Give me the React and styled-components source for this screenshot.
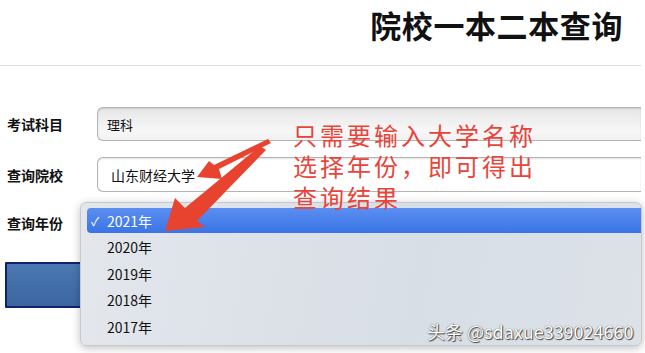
import React from "react";
import styled, { createGlobalStyle } from "styled-components";

const GlobalStyle = createGlobalStyle`
  html, body {
    margin: 0;
    padding: 0;
    background: #fff;
    font-family: "Liberation Sans", "Noto Sans CJK SC", sans-serif;
    overflow: hidden;
  }
`;

const years = ["2021年", "2020年", "2019年", "2018年", "2017年"];

const Page = styled.div`
  position: relative;
  width: 645px;
  height: 353px;
  overflow: hidden;
`;

const Header = styled.header`
  display: flex;
  justify-content: flex-end;
  height: 66px;
  padding-right: 18px;
  border-bottom: 1px solid #dcdcdc;
  box-sizing: border-box;
  margin-right: 4px;
`;

const Title = styled.h1`
  margin: 7px 0 0;
  font-size: 31px;
  font-weight: 700;
  color: #111;
  letter-spacing: 0.6px;
  font-family: "Noto Sans CJK SC", sans-serif;
  line-height: 36px;
`;

const Form = styled.form`
  display: flex;
  flex-direction: column;
  gap: 16px;
  padding: 41px 4px 0 7px;
`;

const Row = styled.div`
  display: flex;
  align-items: center;
  height: ${(p) => p.$h || 34}px;
`;

const Label = styled.label`
  width: 90px;
  flex-shrink: 0;
  font-size: 14px;
  font-weight: 700;
  color: #111;
  font-family: "Noto Sans CJK SC", sans-serif;
`;

const Field = styled.div`
  flex: 1;
  height: 100%;
  box-sizing: border-box;
  border: 1px solid #b4b4b4;
  border-right: none;
  border-radius: 6px 0 0 6px;
  display: flex;
  align-items: center;
  padding-left: ${(p) => p.$pad || 9}px;
  font-size: ${(p) => p.$size || 13}px;
  font-family: "Noto Sans CJK SC", sans-serif;
  color: #111;
  background: ${(p) =>
    p.$gray ? "linear-gradient(#e6e6e6, #f7f7f7 70%, #f2f2f2)" : "#fff"};
  box-shadow: inset 0 1px 2px rgba(0, 0, 0, 0.12);
`;

const SubmitButton = styled.button`
  width: 80px;
  height: 46px;
  margin-left: -2px;
  margin-top: 16px;
  background: linear-gradient(#4a78b3, #3c66a0);
  border: 2px solid #12206e;
  border-radius: 1px;
`;

const Menu = styled.ul`
  position: absolute;
  left: 80px;
  top: 202px;
  width: 562px;
  height: 144px;
  margin: 0;
  padding: 5px 0 0 6px;
  box-sizing: border-box;
  list-style: none;
  border-radius: 6px;
  border: 1px solid #c5c9ce;
  background: linear-gradient(100deg, #e3e7ec, #d8dee6 60%, #dce2e8);
  box-shadow: 0 2px 8px rgba(0, 0, 0, 0.25);
`;

const MenuItem = styled.li`
  height: ${(p) => (p.$active ? 25 : 26.5)}px;
  margin-bottom: ${(p) => (p.$active ? 1 : 0)}px;
  display: flex;
  align-items: center;
  padding-left: ${(p) => (p.$active ? 4 : 20)}px;
  border-radius: 4px 0 0 4px;
  font-size: 14px;
  font-family: "Noto Sans CJK SC", sans-serif;
  color: ${(p) => (p.$active ? "#fff" : "#111")};
  background: ${(p) =>
    p.$active ? "linear-gradient(#5b8ef0, #3a74e6)" : "transparent"};
`;

const Check = styled.span`
  width: 16px;
  font-size: 12px;
`;

const Note = styled.div`
  position: absolute;
  left: 293px;
  top: 119px;
  font-size: 24px;
  line-height: 31px;
  color: #e9443a;
  font-family: "Noto Sans CJK SC", sans-serif;
  letter-spacing: 3px;
`;

const Arrows = styled.svg`
  position: absolute;
  left: 0;
  top: 0;
  pointer-events: none;
`;

const Watermark = styled.div`
  position: absolute;
  left: 427px;
  top: 318px;
  font-size: 18px;
  color: #fff;
  font-family: "Noto Sans CJK SC", sans-serif;
  text-shadow: 0 0 1px #333, 1px 1px 1px #444;
`;

const App = () => {
  return (
    <Page>
      <GlobalStyle />
      <Header>
        <Title>院校一本二本查询</Title>
      </Header>
      <Form>
        <Row>
          <Label>考试科目</Label>
          <Field $gray>理科</Field>
        </Row>
        <Row $h={35}>
          <Label>查询院校</Label>
          <Field $pad={13} $size={14}>山东财经大学</Field>
        </Row>
        <Row $h={30}>
          <Label>查询年份</Label>
        </Row>
        <Row $h={46}>
          <SubmitButton type="button" />
        </Row>
      </Form>

      <Menu>
        {years.map((y, i) => (
          <MenuItem key={y} $active={i === 0}>
            {i === 0 && <Check>✓</Check>}
            {y}
          </MenuItem>
        ))}
      </Menu>

      <Note>
        只需要输入大学名称
        <br />
        选择年份，即可得出
        <br />
        查询结果
      </Note>

      <Arrows width="645" height="353" viewBox="0 0 645 353">
        <polygon
          points="268,139 271,143 219,169 222,179 197,177 209,161 214,165"
          fill="#e8432f"
        />
        <polygon
          points="260,146 266,150 197,221 205,227 165,231 175,198 185,208"
          fill="#e8432f"
        />
      </Arrows>

      <Watermark>头条 @sdaxue339024660</Watermark>
    </Page>
  );
};

export default App;
